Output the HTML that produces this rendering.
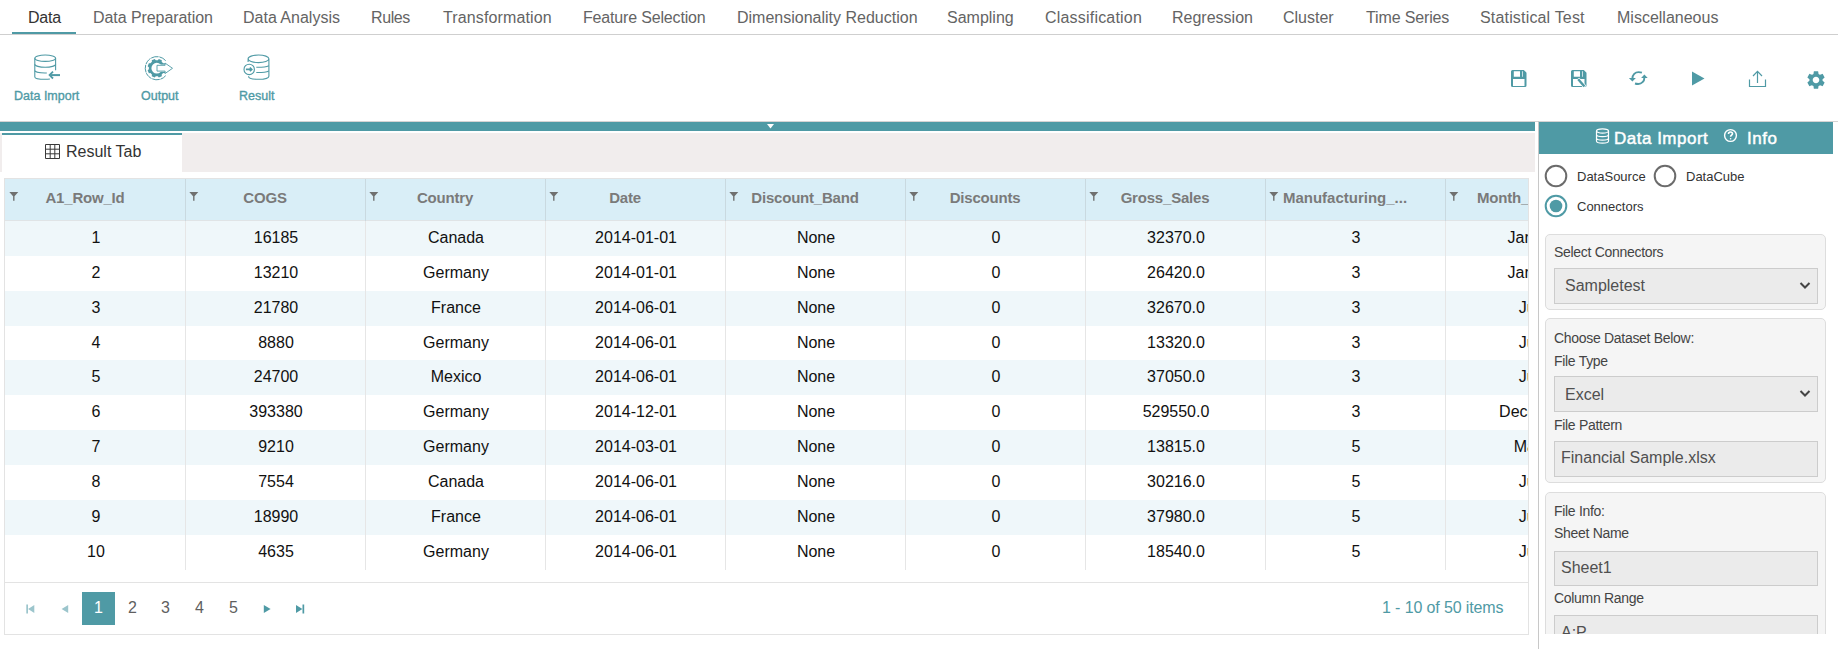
<!DOCTYPE html>
<html><head><meta charset="utf-8">
<style>
*{box-sizing:border-box;margin:0;padding:0}
html,body{width:1838px;height:649px;overflow:hidden;background:#fff;font-family:"Liberation Sans",sans-serif;position:relative}
.a{position:absolute;white-space:nowrap}
.tab{position:absolute;top:9px;font-size:16px;line-height:18px;color:#646464}
.tl{position:absolute;font-size:12.5px;font-weight:400;color:#4f9aa5;line-height:14px;-webkit-text-stroke:0.35px #4f9aa5}
.hdr{position:absolute;font-size:15px;font-weight:700;color:#7a7a7a;letter-spacing:-0.2px;line-height:18px}
.cell{position:absolute;font-size:16px;color:#111;text-align:center;width:180px;line-height:18px}
.lbl{position:absolute;left:1554px;font-size:14px;color:#444;line-height:16px;letter-spacing:-0.3px}
.inp{position:absolute;left:1554px;width:264px;background:#ebebeb;border:1px solid #ccc}
.box{position:absolute;left:1545px;width:281px;background:#f5f5f5;border:1px solid #ddd;border-radius:5px}
</style></head><body>

<!-- top menu -->
<div class="a tab" style="left:28px;color:#333;letter-spacing:-0.25px">Data</div>
<div class="a tab" style="left:93px;letter-spacing:-0.07px">Data Preparation</div>
<div class="a tab" style="left:243px">Data Analysis</div>
<div class="a tab" style="left:371px;letter-spacing:-0.4px">Rules</div>
<div class="a tab" style="left:443px;letter-spacing:0.12px">Transformation</div>
<div class="a tab" style="left:583px;letter-spacing:-0.17px">Feature Selection</div>
<div class="a tab" style="left:737px">Dimensionality Reduction</div>
<div class="a tab" style="left:947px">Sampling</div>
<div class="a tab" style="left:1045px;letter-spacing:0.2px">Classification</div>
<div class="a tab" style="left:1172px">Regression</div>
<div class="a tab" style="left:1283px">Cluster</div>
<div class="a tab" style="left:1366px;letter-spacing:-0.14px">Time Series</div>
<div class="a tab" style="left:1480px;letter-spacing:0.17px">Statistical Test</div>
<div class="a tab" style="left:1617px">Miscellaneous</div>
<div class="a" style="left:0;top:34px;width:1838px;height:1px;background:#cfcfcf"></div>
<div class="a" style="left:12px;top:32px;width:64px;height:2px;background:#4f9aa5"></div>


<!-- toolbar left -->
<svg class="a" style="left:34px;top:54px" width="28" height="28" viewBox="0 0 28 28" fill="none" stroke="#4f9aa5" stroke-width="1.1">
 <ellipse cx="11.2" cy="4.2" rx="10.4" ry="3.2"/>
 <path d="M0.8 4.2V23C0.8 24.4 5 25.3 11.2 25.3C13 25.3 14.5 25.2 15.9 25"/>
 <path d="M21.6 4.2V16.2"/>
 <path d="M0.8 10.2C0.8 11.9 5.5 13.3 11.2 13.3S21.6 11.9 21.6 10.2"/>
 <path d="M0.8 16.5C0.8 17.8 5 19 11 19H12.8"/>
 <path d="M26 21.1H17" stroke-width="2"/>
 <path d="M19 17.7L15.6 21.1L19 24.5" stroke-width="1.8"/>
</svg>
<div class="a tl" style="left:14px;top:89px">Data Import</div>
<svg class="a" style="left:144px;top:55px" width="31" height="27" viewBox="0 0 31 27">
 <path d="M21.7 5.7A11.6 11.6 0 1 0 21.7 20.7" fill="none" stroke="#4f9aa5" stroke-width="1" stroke-dasharray="7.5 0.8"/>
 <path d="M20.73 14.24 L21.98 15.23 L20.73 18.25 L19.15 18.07 L17.67 19.55 L17.85 21.13 L14.83 22.38 L13.84 21.13 L11.76 21.13 L10.77 22.38 L7.75 21.13 L7.93 19.55 L6.45 18.07 L4.87 18.25 L3.62 15.23 L4.87 14.24 L4.87 12.16 L3.62 11.17 L4.87 8.15 L6.45 8.33 L7.93 6.85 L7.75 5.27 L10.77 4.02 L11.76 5.27 L13.84 5.27 L14.83 4.02 L17.85 5.27 L17.67 6.85 L19.15 8.33 L20.73 8.15 L21.98 11.17 L20.73 12.16Z M18.200000000000003 13.2A5.4 5.4 0 1 0 7.4 13.2A5.4 5.4 0 1 0 18.200000000000003 13.2Z" fill="#4f9aa5" fill-rule="evenodd"/>
 <rect x="13" y="9.6" width="9" height="7.2" fill="#fff"/>
 <path d="M13 10.3H21.1V8.1L28.5 13.3L21.1 18.5V16.1H13Z" fill="#fff" stroke="#4f9aa5" stroke-width="0.9" stroke-linejoin="miter"/>
</svg>
<div class="a tl" style="left:141px;top:89px">Output</div>
<svg class="a" style="left:242px;top:54px" width="30" height="28" viewBox="0 0 30 28" fill="none" stroke="#4f9aa5" stroke-width="1.1">
 <path d="M6.1 8V4.8C6.1 2.7 10.7 1 16.5 1S26.9 2.7 26.9 4.8V22.2C26.9 24 22.3 25.3 16.5 25.3S6.5 24 6.5 22.2M6.1 4.8C6.1 6.9 10.7 8.6 16.5 8.6S26.9 6.9 26.9 4.8"/>
 <path d="M14.3 13.3C20 13.4 24.5 12.8 26.9 11.7"/>
 <path d="M14.3 18.5C20 18.6 24.5 18 26.9 16.9"/>
 <circle cx="7.2" cy="15.4" r="5.2"/>
 <path d="M3.9 15.4H9.6M7.9 13.5L9.8 15.4L7.9 17.3" stroke-width="1.6"/>
</svg>
<div class="a tl" style="left:239px;top:89px">Result</div>

<!-- toolbar right -->
<svg class="a" style="left:1510px;top:69px" width="18" height="19" viewBox="0 0 18 19"><path d="M1 2.4Q1 0.9 2.5 0.9H13.8L16.5 3.8V16.4Q16.5 17.9 15 17.9H2.5Q1 17.9 1 16.4Z M3.8 2.2H10V7.7H3.8Z M12 2.2H12.7V7.7H12Z M3 10H14.5V16.9H3Z" fill="#4f9aa5" fill-rule="evenodd"/></svg>
<svg class="a" style="left:1570px;top:69px" width="18" height="20" viewBox="0 0 18 20"><path d="M1 2.4Q1 0.9 2.5 0.9H13.8L16.5 3.8V16.4Q16.5 17.9 15 17.9H2.5Q1 17.9 1 16.4Z M3.8 2.2H10V7.7H3.8Z M12 2.2H12.7V7.7H12Z M3 10H14.5V16.9H3Z" fill="#4f9aa5" fill-rule="evenodd"/>
 <path d="M9.1 9.5L7.3 11.1L13.6 18.3L15.4 16.7Z" fill="#4f9aa5" stroke="#fff" stroke-width="1.3" stroke-linejoin="round"/>
 <path d="M9.1 9.5L7.3 11.1L13.6 18.3L15.4 16.7Z" fill="#4f9aa5"/></svg>
<svg class="a" style="left:1628px;top:70px" width="21" height="17" viewBox="0 0 21 17" fill="none" stroke="#4f9aa5" stroke-width="1.9">
 <path d="M4.4 8.6C4.4 4.6 7.2 2.1 10.6 2.1C11.8 2.1 12.9 2.3 13.9 2.6"/>
 <path d="M16.4 7.4C16.4 11.4 13.6 14 10.2 14C9 14 7.9 13.8 7 13.5"/>
 <path d="M0.9 8H7.9L4.4 11.6Z M13.1 8.1H19.7L16.4 4.6Z" fill="#4f9aa5" stroke="none"/>
</svg>
<svg class="a" style="left:1692px;top:71px" width="13" height="15" viewBox="0 0 13 15"><path d="M0 0.5L12.5 7.5L0 14.5Z" fill="#4f9aa5"/></svg>
<svg class="a" style="left:1748px;top:70px" width="19" height="18" viewBox="0 0 19 18" fill="none" stroke="#4f9aa5" stroke-width="1.2">
 <path d="M1.5 9.5V16.5H17.5V9.5"/><path d="M9.5 13V1.5M5 6L9.5 1.3L14 6"/>
</svg>
<svg class="a" style="left:1805px;top:69px" width="22" height="22" viewBox="0 0 24 24"><path fill="#4f9aa5" d="M19.14 12.94c.04-.3.06-.61.06-.94 0-.32-.02-.64-.07-.94l2.03-1.58a.49.49 0 0 0 .12-.61l-1.92-3.32a.488.488 0 0 0-.59-.22l-2.39.96c-.5-.38-1.03-.7-1.62-.94l-.36-2.54a.484.484 0 0 0-.48-.41h-3.84c-.24 0-.43.17-.47.41l-.36 2.54c-.59.24-1.13.57-1.62.94l-2.39-.96c-.22-.08-.47 0-.59.22L2.74 8.87c-.12.21-.08.47.12.61l2.03 1.58c-.05.3-.09.63-.09.94s.02.64.07.94l-2.03 1.58a.49.49 0 0 0-.12.61l1.92 3.32c.12.22.37.29.59.22l2.39-.96c.5.38 1.03.7 1.62.94l.36 2.54c.05.24.24.41.48.41h3.84c.24 0 .44-.17.47-.41l.36-2.54c.59-.24 1.13-.56 1.62-.94l2.39.96c.22.08.47 0 .59-.22l1.92-3.32c.12-.22.07-.47-.12-.61l-2.01-1.58zM12 15.6c-1.98 0-3.6-1.62-3.6-3.6s1.62-3.6 3.6-3.6 3.6 1.62 3.6 3.6-1.62 3.6-3.6 3.6z"/></svg>

<!-- splitter band -->
<div class="a" style="left:0;top:121px;width:1838px;height:1px;background:#d6d3d3"></div>
<div class="a" style="left:0;top:122px;width:1535px;height:9px;background:#4f9aa5"></div>
<svg class="a" style="left:767px;top:124px" width="7" height="5" viewBox="0 0 7 5"><path d="M0 0H7L3.5 4.5Z" fill="#fff"/></svg>

<!-- tab strip -->
<div class="a" style="left:0;top:133px;width:1535px;height:39px;background:#f1eded"></div>
<div class="a" style="left:2px;top:133px;width:180px;height:39px;background:#fff;border-top:2px solid #4f9aa5"></div>
<svg class="a" style="left:44px;top:143px" width="17" height="17" viewBox="0 0 17 17" fill="none" stroke="#3a3a3a" stroke-width="1"><path d="M1.5 1.5H15.5V15.5H1.5Z M6.2 1.5V15.5M10.8 1.5V15.5M1.5 6.2H15.5M1.5 10.8H15.5"/></svg>
<div class="a" style="left:66px;top:143px;font-size:16px;line-height:18px;color:#333">Result Tab</div>
<!-- grid -->
<div class="a" style="left:4px;top:178px;width:1525px;height:457px;border:1px solid #e3e3e3;overflow:hidden">
<div class="a" style="left:0;top:0;width:1700px;height:42px;background:#d9eef7;border-bottom:1px solid #e0e4e6"></div>
<div class="a" style="left:0;top:42px;width:1700px;height:35px;background:#eff7fa"></div>
<div class="a" style="left:0;top:77px;width:1700px;height:35px;background:#fff"></div>
<div class="a" style="left:0;top:112px;width:1700px;height:35px;background:#eff7fa"></div>
<div class="a" style="left:0;top:147px;width:1700px;height:34px;background:#fff"></div>
<div class="a" style="left:0;top:181px;width:1700px;height:35px;background:#eff7fa"></div>
<div class="a" style="left:0;top:216px;width:1700px;height:35px;background:#fff"></div>
<div class="a" style="left:0;top:251px;width:1700px;height:35px;background:#eff7fa"></div>
<div class="a" style="left:0;top:286px;width:1700px;height:35px;background:#fff"></div>
<div class="a" style="left:0;top:321px;width:1700px;height:35px;background:#eff7fa"></div>
<div class="a" style="left:0;top:356px;width:1700px;height:35px;background:#fff"></div>
<div class="a" style="left:180px;top:0;width:1px;height:42px;background:#c9d9e0"></div>
<div class="a" style="left:180px;top:42px;width:1px;height:349px;background:#e6e6e6"></div>
<div class="a" style="left:360px;top:0;width:1px;height:42px;background:#c9d9e0"></div>
<div class="a" style="left:360px;top:42px;width:1px;height:349px;background:#e6e6e6"></div>
<div class="a" style="left:540px;top:0;width:1px;height:42px;background:#c9d9e0"></div>
<div class="a" style="left:540px;top:42px;width:1px;height:349px;background:#e6e6e6"></div>
<div class="a" style="left:720px;top:0;width:1px;height:42px;background:#c9d9e0"></div>
<div class="a" style="left:720px;top:42px;width:1px;height:349px;background:#e6e6e6"></div>
<div class="a" style="left:900px;top:0;width:1px;height:42px;background:#c9d9e0"></div>
<div class="a" style="left:900px;top:42px;width:1px;height:349px;background:#e6e6e6"></div>
<div class="a" style="left:1080px;top:0;width:1px;height:42px;background:#c9d9e0"></div>
<div class="a" style="left:1080px;top:42px;width:1px;height:349px;background:#e6e6e6"></div>
<div class="a" style="left:1260px;top:0;width:1px;height:42px;background:#c9d9e0"></div>
<div class="a" style="left:1260px;top:42px;width:1px;height:349px;background:#e6e6e6"></div>
<div class="a" style="left:1440px;top:0;width:1px;height:42px;background:#c9d9e0"></div>
<div class="a" style="left:1440px;top:42px;width:1px;height:349px;background:#e6e6e6"></div>
<svg class="a" style="left:4px;top:12px" width="10" height="10" viewBox="0 0 10 10"><path d="M0.3 0.9H9.3L5.5 5.2V9.7H4.1V5.2Z" fill="#707070"/></svg>
<div class="a hdr" style="top:10px;left:0px;width:160px;text-align:center">A1_Row_Id</div>
<svg class="a" style="left:184px;top:12px" width="10" height="10" viewBox="0 0 10 10"><path d="M0.3 0.9H9.3L5.5 5.2V9.7H4.1V5.2Z" fill="#707070"/></svg>
<div class="a hdr" style="top:10px;left:180px;width:160px;text-align:center">COGS</div>
<svg class="a" style="left:364px;top:12px" width="10" height="10" viewBox="0 0 10 10"><path d="M0.3 0.9H9.3L5.5 5.2V9.7H4.1V5.2Z" fill="#707070"/></svg>
<div class="a hdr" style="top:10px;left:360px;width:160px;text-align:center">Country</div>
<svg class="a" style="left:544px;top:12px" width="10" height="10" viewBox="0 0 10 10"><path d="M0.3 0.9H9.3L5.5 5.2V9.7H4.1V5.2Z" fill="#707070"/></svg>
<div class="a hdr" style="top:10px;left:540px;width:160px;text-align:center">Date</div>
<svg class="a" style="left:724px;top:12px" width="10" height="10" viewBox="0 0 10 10"><path d="M0.3 0.9H9.3L5.5 5.2V9.7H4.1V5.2Z" fill="#707070"/></svg>
<div class="a hdr" style="top:10px;left:720px;width:160px;text-align:center">Discount_Band</div>
<svg class="a" style="left:904px;top:12px" width="10" height="10" viewBox="0 0 10 10"><path d="M0.3 0.9H9.3L5.5 5.2V9.7H4.1V5.2Z" fill="#707070"/></svg>
<div class="a hdr" style="top:10px;left:900px;width:160px;text-align:center">Discounts</div>
<svg class="a" style="left:1084px;top:12px" width="10" height="10" viewBox="0 0 10 10"><path d="M0.3 0.9H9.3L5.5 5.2V9.7H4.1V5.2Z" fill="#707070"/></svg>
<div class="a hdr" style="top:10px;left:1080px;width:160px;text-align:center">Gross_Sales</div>
<svg class="a" style="left:1264px;top:12px" width="10" height="10" viewBox="0 0 10 10"><path d="M0.3 0.9H9.3L5.5 5.2V9.7H4.1V5.2Z" fill="#707070"/></svg>
<div class="a hdr" style="top:10px;left:1260px;width:160px;text-align:center;letter-spacing:0">Manufacturing_...</div>
<svg class="a" style="left:1444px;top:12px" width="10" height="10" viewBox="0 0 10 10"><path d="M0.3 0.9H9.3L5.5 5.2V9.7H4.1V5.2Z" fill="#707070"/></svg>
<div class="a hdr" style="top:10px;left:1438px;width:160px;text-align:center">Month_Name</div>
<div class="a cell" style="left:1px;top:50px">1</div>
<div class="a cell" style="left:181px;top:50px">16185</div>
<div class="a cell" style="left:361px;top:50px">Canada</div>
<div class="a cell" style="left:541px;top:50px">2014-01-01</div>
<div class="a cell" style="left:721px;top:50px">None</div>
<div class="a cell" style="left:901px;top:50px">0</div>
<div class="a cell" style="left:1081px;top:50px">32370.0</div>
<div class="a cell" style="left:1261px;top:50px">3</div>
<div class="a cell" style="left:1441px;top:50px">January</div>
<div class="a cell" style="left:1px;top:85px">2</div>
<div class="a cell" style="left:181px;top:85px">13210</div>
<div class="a cell" style="left:361px;top:85px">Germany</div>
<div class="a cell" style="left:541px;top:85px">2014-01-01</div>
<div class="a cell" style="left:721px;top:85px">None</div>
<div class="a cell" style="left:901px;top:85px">0</div>
<div class="a cell" style="left:1081px;top:85px">26420.0</div>
<div class="a cell" style="left:1261px;top:85px">3</div>
<div class="a cell" style="left:1441px;top:85px">January</div>
<div class="a cell" style="left:1px;top:120px">3</div>
<div class="a cell" style="left:181px;top:120px">21780</div>
<div class="a cell" style="left:361px;top:120px">France</div>
<div class="a cell" style="left:541px;top:120px">2014-06-01</div>
<div class="a cell" style="left:721px;top:120px">None</div>
<div class="a cell" style="left:901px;top:120px">0</div>
<div class="a cell" style="left:1081px;top:120px">32670.0</div>
<div class="a cell" style="left:1261px;top:120px">3</div>
<div class="a cell" style="left:1441px;top:120px">June</div>
<div class="a cell" style="left:1px;top:155px">4</div>
<div class="a cell" style="left:181px;top:155px">8880</div>
<div class="a cell" style="left:361px;top:155px">Germany</div>
<div class="a cell" style="left:541px;top:155px">2014-06-01</div>
<div class="a cell" style="left:721px;top:155px">None</div>
<div class="a cell" style="left:901px;top:155px">0</div>
<div class="a cell" style="left:1081px;top:155px">13320.0</div>
<div class="a cell" style="left:1261px;top:155px">3</div>
<div class="a cell" style="left:1441px;top:155px">June</div>
<div class="a cell" style="left:1px;top:189px">5</div>
<div class="a cell" style="left:181px;top:189px">24700</div>
<div class="a cell" style="left:361px;top:189px">Mexico</div>
<div class="a cell" style="left:541px;top:189px">2014-06-01</div>
<div class="a cell" style="left:721px;top:189px">None</div>
<div class="a cell" style="left:901px;top:189px">0</div>
<div class="a cell" style="left:1081px;top:189px">37050.0</div>
<div class="a cell" style="left:1261px;top:189px">3</div>
<div class="a cell" style="left:1441px;top:189px">June</div>
<div class="a cell" style="left:1px;top:224px">6</div>
<div class="a cell" style="left:181px;top:224px">393380</div>
<div class="a cell" style="left:361px;top:224px">Germany</div>
<div class="a cell" style="left:541px;top:224px">2014-12-01</div>
<div class="a cell" style="left:721px;top:224px">None</div>
<div class="a cell" style="left:901px;top:224px">0</div>
<div class="a cell" style="left:1081px;top:224px">529550.0</div>
<div class="a cell" style="left:1261px;top:224px">3</div>
<div class="a cell" style="left:1441px;top:224px">December</div>
<div class="a cell" style="left:1px;top:259px">7</div>
<div class="a cell" style="left:181px;top:259px">9210</div>
<div class="a cell" style="left:361px;top:259px">Germany</div>
<div class="a cell" style="left:541px;top:259px">2014-03-01</div>
<div class="a cell" style="left:721px;top:259px">None</div>
<div class="a cell" style="left:901px;top:259px">0</div>
<div class="a cell" style="left:1081px;top:259px">13815.0</div>
<div class="a cell" style="left:1261px;top:259px">5</div>
<div class="a cell" style="left:1441px;top:259px">March</div>
<div class="a cell" style="left:1px;top:294px">8</div>
<div class="a cell" style="left:181px;top:294px">7554</div>
<div class="a cell" style="left:361px;top:294px">Canada</div>
<div class="a cell" style="left:541px;top:294px">2014-06-01</div>
<div class="a cell" style="left:721px;top:294px">None</div>
<div class="a cell" style="left:901px;top:294px">0</div>
<div class="a cell" style="left:1081px;top:294px">30216.0</div>
<div class="a cell" style="left:1261px;top:294px">5</div>
<div class="a cell" style="left:1441px;top:294px">June</div>
<div class="a cell" style="left:1px;top:329px">9</div>
<div class="a cell" style="left:181px;top:329px">18990</div>
<div class="a cell" style="left:361px;top:329px">France</div>
<div class="a cell" style="left:541px;top:329px">2014-06-01</div>
<div class="a cell" style="left:721px;top:329px">None</div>
<div class="a cell" style="left:901px;top:329px">0</div>
<div class="a cell" style="left:1081px;top:329px">37980.0</div>
<div class="a cell" style="left:1261px;top:329px">5</div>
<div class="a cell" style="left:1441px;top:329px">June</div>
<div class="a cell" style="left:1px;top:364px">10</div>
<div class="a cell" style="left:181px;top:364px">4635</div>
<div class="a cell" style="left:361px;top:364px">Germany</div>
<div class="a cell" style="left:541px;top:364px">2014-06-01</div>
<div class="a cell" style="left:721px;top:364px">None</div>
<div class="a cell" style="left:901px;top:364px">0</div>
<div class="a cell" style="left:1081px;top:364px">18540.0</div>
<div class="a cell" style="left:1261px;top:364px">5</div>
<div class="a cell" style="left:1441px;top:364px">June</div>
<div class="a" style="left:0;top:403px;width:1525px;height:1px;background:#e3e3e3"></div>
</div>
<!-- pager -->
<svg class="a" style="left:25px;top:604px" width="11" height="11" viewBox="0 0 11 11"><path d="M1.3 0.4V9.6H3V0.4Z M3.1 5L9.3 0.9V9Z" fill="#9cc5cc"/></svg>
<svg class="a" style="left:60px;top:604px" width="10" height="11" viewBox="0 0 10 11"><path d="M1.6 5L8.2 0.9V9Z" fill="#9cc5cc"/></svg>
<div class="a" style="left:82px;top:592px;width:33px;height:33px;background:#4f9aa5;color:#fff;font-size:16px;line-height:31px;text-align:center">1</div>
<div class="a" style="left:116px;top:591px;width:33px;height:33px;color:#5f5f5f;font-size:16px;line-height:33px;text-align:center">2</div>
<div class="a" style="left:149px;top:591px;width:33px;height:33px;color:#5f5f5f;font-size:16px;line-height:33px;text-align:center">3</div>
<div class="a" style="left:183px;top:591px;width:33px;height:33px;color:#5f5f5f;font-size:16px;line-height:33px;text-align:center">4</div>
<div class="a" style="left:217px;top:591px;width:33px;height:33px;color:#5f5f5f;font-size:16px;line-height:33px;text-align:center">5</div>
<svg class="a" style="left:263px;top:604px" width="10" height="11" viewBox="0 0 10 11"><path d="M0.8 0.9V9L7.6 5Z" fill="#4f9aa5"/></svg>
<svg class="a" style="left:295px;top:604px" width="11" height="11" viewBox="0 0 11 11"><path d="M1 0.9V9L7.4 5Z M7.5 0.4V9.6H9.2V0.4Z" fill="#4f9aa5"/></svg>
<div class="a" style="left:1382px;top:599px;font-size:16px;line-height:18px;color:#4f9aa5;letter-spacing:-0.12px">1 - 10 of 50 items</div>

<!-- right panel -->
<div class="a" style="left:1538px;top:121px;width:1px;height:528px;background:#c8c8c8"></div>
<div class="a" style="left:1539px;top:122px;width:294px;height:32px;background:#4f9aa5"></div>
<svg class="a" style="left:1595px;top:128px" width="15" height="16" viewBox="0 0 15 16" fill="none" stroke="#fff" stroke-width="1.2"><ellipse cx="7.5" cy="3" rx="6" ry="2.2"/><path d="M1.5 3V13C1.5 14.2 4.2 15.2 7.5 15.2S13.5 14.2 13.5 13V3M1.5 6.5C1.5 7.7 4.2 8.7 7.5 8.7S13.5 7.7 13.5 6.5M1.5 10C1.5 11.2 4.2 12.2 7.5 12.2S13.5 11.2 13.5 10"/></svg>
<div class="a" style="left:1614px;top:129px;font-size:17px;font-weight:400;line-height:20px;color:#fff;letter-spacing:0.5px;-webkit-text-stroke:0.45px #fff">Data Import</div>
<svg class="a" style="left:1723px;top:128px" width="15" height="15" viewBox="0 0 15 15" fill="none" stroke="#fff" stroke-width="1.4"><circle cx="7.5" cy="7.5" r="5.9"/><path d="M5.5 6C5.5 4.8 6.3 4 7.5 4S9.5 4.8 9.5 5.8C9.5 7.1 7.6 7.3 7.6 8.7" stroke-width="1.6"/><circle cx="7.6" cy="10.8" r="0.8" fill="#fff" stroke="none"/></svg>
<div class="a" style="left:1747px;top:129px;font-size:17px;font-weight:400;line-height:20px;color:#fff;letter-spacing:0.5px;-webkit-text-stroke:0.45px #fff">Info</div>

<svg class="a" style="left:1544px;top:164px" width="24" height="24" viewBox="0 0 24 24"><circle cx="12" cy="12" r="10.3" fill="#fff" stroke="#6b6b6b" stroke-width="2"/></svg>
<div class="a" style="left:1577px;top:169px;font-size:13px;line-height:16px;color:#333">DataSource</div>
<svg class="a" style="left:1653px;top:164px" width="24" height="24" viewBox="0 0 24 24"><circle cx="12" cy="12" r="10.3" fill="#fff" stroke="#6b6b6b" stroke-width="2"/></svg>
<div class="a" style="left:1686px;top:169px;font-size:13px;line-height:16px;color:#333">DataCube</div>
<svg class="a" style="left:1544px;top:194px" width="24" height="24" viewBox="0 0 24 24"><circle cx="12" cy="12" r="10.3" fill="#fff" stroke="#4f9aa5" stroke-width="2"/><circle cx="12" cy="12" r="6.3" fill="#4f9aa5"/></svg>
<div class="a" style="left:1577px;top:199px;font-size:13px;line-height:16px;color:#333">Connectors</div>

<div class="box" style="top:234px;height:76px"></div>
<div class="lbl" style="top:244px">Select Connectors</div>
<div class="inp" style="top:268px;height:36px"></div>
<div class="a" style="left:1565px;top:277px;font-size:16px;line-height:18px;color:#505050">Sampletest</div>
<svg class="a" style="left:1799px;top:281px" width="12" height="9" viewBox="0 0 12 9"><path d="M1.5 2L6 6.5L10.5 2" fill="none" stroke="#444" stroke-width="2"/></svg>

<div class="box" style="top:318px;height:165px"></div>
<div class="lbl" style="top:330px">Choose Dataset Below:</div>
<div class="lbl" style="top:353px">File Type</div>
<div class="inp" style="top:376px;height:36px"></div>
<div class="a" style="left:1565px;top:386px;font-size:16px;line-height:18px;color:#505050">Excel</div>
<svg class="a" style="left:1799px;top:389px" width="12" height="9" viewBox="0 0 12 9"><path d="M1.5 2L6 6.5L10.5 2" fill="none" stroke="#444" stroke-width="2"/></svg>
<div class="lbl" style="top:417px">File Pattern</div>
<div class="inp" style="top:441px;height:36px"></div>
<div class="a" style="left:1561px;top:449px;font-size:16px;line-height:18px;color:#505050">Financial Sample.xlsx</div>

<div class="a" style="left:1545px;top:492px;width:281px;height:142px;overflow:hidden">
 <div class="box" style="left:0;top:0;height:200px"></div>
 <div class="lbl" style="left:9px;top:11px">File Info:</div>
 <div class="lbl" style="left:9px;top:33px">Sheet Name</div>
 <div class="inp" style="left:9px;top:59px;height:35px"></div>
 <div class="a" style="left:16px;top:67px;font-size:16px;line-height:18px;color:#505050">Sheet1</div>
 <div class="lbl" style="left:9px;top:98px">Column Range</div>
 <div class="inp" style="left:9px;top:123px;height:36px"></div>
 <div class="a" style="left:16px;top:132px;font-size:16px;line-height:18px;color:#505050">A:P</div>
</div>

</body></html>
